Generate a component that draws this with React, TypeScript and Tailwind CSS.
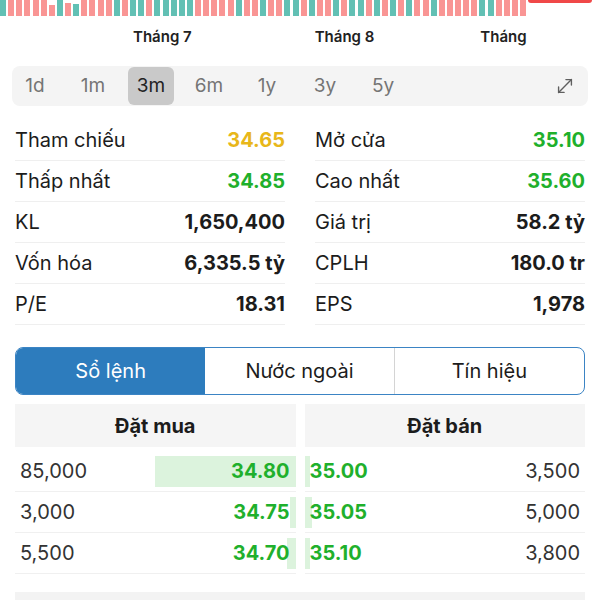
import React from 'react';

// volume bars of the chart strip: t = up (teal), r = down (red)
const barColors =
  'trrrrrrtrtrrrrtrttrtttttrrrrrtrrtrrttrtrrtrttrtrtrtrrtrrrrrttrrrr';
const shortBars: Record<number, number> = { 6: 11, 8: 13, 9: 12 };

const stats = [
  [
    { label: 'Tham chiếu', value: '34.65', color: 'text-[#e8b71a]' },
    { label: 'Thấp nhất', value: '34.85', color: 'text-[#1fb02c]' },
    { label: 'KL', value: '1,650,400', color: 'text-[#1c1c1c]' },
    { label: 'Vốn hóa', value: '6,335.5 tỷ', color: 'text-[#1c1c1c]' },
    { label: 'P/E', value: '18.31', color: 'text-[#1c1c1c]' },
  ],
  [
    { label: 'Mở cửa', value: '35.10', color: 'text-[#1fb02c]' },
    { label: 'Cao nhất', value: '35.60', color: 'text-[#1fb02c]' },
    { label: 'Giá trị', value: '58.2 tỷ', color: 'text-[#1c1c1c]' },
    { label: 'CPLH', value: '180.0 tr', color: 'text-[#1c1c1c]' },
    { label: 'EPS', value: '1,978', color: 'text-[#1c1c1c]' },
  ],
];

const ranges = ['1d', '1m', '3m', '6m', '1y', '3y', '5y'];

const bids = [
  { qty: '85,000', price: '34.80', bar: 141 },
  { qty: '3,000', price: '34.75', bar: 6 },
  { qty: '5,500', price: '34.70', bar: 9 },
];

const asks = [
  { qty: '3,500', price: '35.00', bar: 5 },
  { qty: '5,000', price: '35.05', bar: 7 },
  { qty: '3,800', price: '35.10', bar: 5 },
];

const App = () => {
  const bars = barColors.split('').map((c, i) => (
    <div
      key={i}
      className={`w-[6px] ${c === 't' ? 'bg-[#62c0b4]' : 'bg-[#f99594]'}`}
      style={{ height: shortBars[i] ?? 16 }}
    />
  ));

  return (
    <div className="w-[600px] h-[600px] overflow-hidden bg-white font-[Inter,'Liberation_Sans',sans-serif] text-[#1c1c1c]">
      {/* chart strip */}
      <div className="flex items-start h-[17px]">
        <div className="w-[526px] h-[16px] flex items-end justify-between">{bars}</div>
        <div className="ml-[2px] w-[64px] h-[3px] bg-[#f04848] rounded-b-sm" />
      </div>
      <div className="w-[528px] h-[40px] overflow-hidden flex items-center whitespace-nowrap pl-[133px] text-[15px] font-semibold text-[#222]">
        <span>Tháng 7</span>
        <span className="ml-[123px]">Tháng 8</span>
        <span className="ml-[106px]">Tháng 9</span>
      </div>

      {/* time ranges */}
      <div className="mt-[9px] mx-[12px] h-[40px] rounded-lg bg-[#f4f4f4] flex items-center">
        <div className="flex gap-[12px]">
          {ranges.map((r) => (
            <div
              key={r}
              className={`w-[46px] h-[38px] rounded-md flex items-center justify-center text-[19px] ${
                r === '3m' ? 'bg-[#c9c9c9] text-[#222]' : 'text-[#757575]'
              }`}
            >
              {r}
            </div>
          ))}
        </div>
        <svg
          className="ml-auto mr-[12px]"
          width="22"
          height="22"
          viewBox="0 0 24 24"
          fill="none"
          stroke="#5f5f5f"
          strokeWidth="1.5"
          strokeLinecap="round"
          strokeLinejoin="round"
        >
          <path d="M11 19H5v-6" />
          <path d="M13 5h6v6" />
          <path d="M19 5 5 19" />
        </svg>
      </div>

      {/* stats */}
      <div className="mt-[14px] px-[15px] grid grid-cols-2 gap-x-[30px]">
        {stats.map((col, ci) => (
          <div key={ci} className="flex flex-col">
            {col.map((s) => (
              <div
                key={s.label}
                className="h-[41px] flex items-center justify-between border-b border-[#efefef] text-[20px]"
              >
                <span>{s.label}</span>
                <span className={`font-bold ${s.color}`}>{s.value}</span>
              </div>
            ))}
          </div>
        ))}
      </div>

      {/* tabs */}
      <div className="mt-[22px] mx-[15px] h-[48px] rounded-lg border border-[#3b84c4] grid grid-cols-3 overflow-hidden text-[20px]">
        <div className="bg-[#2d7cbd] text-white flex items-center justify-center">Sổ lệnh</div>
        <div className="flex items-center justify-center border-r border-[#d4d4d4]">Nước ngoài</div>
        <div className="flex items-center justify-center">Tín hiệu</div>
      </div>

      {/* order book */}
      <div className="mt-[9px] px-[15px] flex gap-[9px]">
        <div className="flex-1 flex flex-col">
          <div className="h-[43px] bg-[#f5f5f5] flex items-center justify-center text-[20px] font-bold">
            Đặt mua
          </div>
          <div className="h-[4px]" />
          {bids.map((b) => (
            <div
              key={b.qty}
              className="h-[41px] flex items-center justify-between border-b border-[#f0f0f0] text-[20px]"
            >
              <span className="pl-[5px] text-[#333]">{b.qty}</span>
              <div className="relative h-[31px] flex items-center justify-end">
                <div className="absolute right-0 top-0 h-full bg-[#dcf3dd]" style={{ width: b.bar }} />
                <span className="relative pr-[6px] font-bold text-[#1fb02c]">{b.price}</span>
              </div>
            </div>
          ))}
        </div>
        <div className="flex-1 flex flex-col">
          <div className="h-[43px] bg-[#f5f5f5] flex items-center justify-center text-[20px] font-bold">
            Đặt bán
          </div>
          <div className="h-[4px]" />
          {asks.map((a) => (
            <div
              key={a.qty}
              className="h-[41px] flex items-center justify-between border-b border-[#f0f0f0] text-[20px]"
            >
              <div className="relative h-[31px] flex items-center">
                <div className="absolute left-0 top-0 h-full bg-[#dcf3dd]" style={{ width: a.bar }} />
                <span className="relative pl-[5px] font-bold text-[#1fb02c]">{a.price}</span>
              </div>
              <span className="pr-[5px] text-[#333]">{a.qty}</span>
            </div>
          ))}
        </div>
      </div>
      <div className="mt-[18px] mx-[15px] h-[10px] bg-[#f3f3f3]" />
    </div>
  );
};

export default App;
